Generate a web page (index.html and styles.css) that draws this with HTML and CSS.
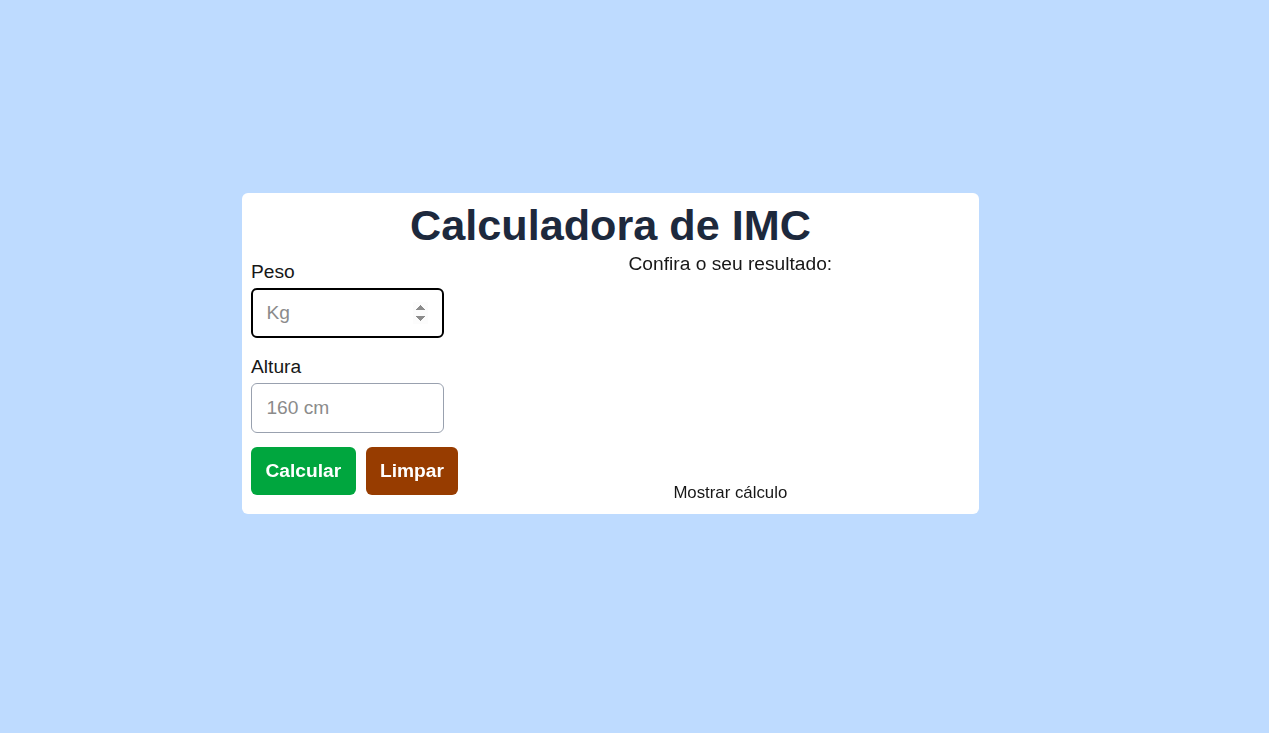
FILE: index.html
```html
<!DOCTYPE html>
<html lang="pt-BR">
<head>
<meta charset="utf-8">
<title>Calculadora de IMC</title>
<link rel="stylesheet" href="styles.css">
</head>
<body>
<main class="page">
  <section class="card">
    <h1 class="title">Calculadora de IMC</h1>
    <div class="grid">
      <form class="form">
        <div class="field">
          <label class="label" for="peso">Peso</label>
          <input class="input input-focus" id="peso" type="number" placeholder="Kg" autofocus>
        </div>
        <div class="field">
          <label class="label" for="altura">Altura</label>
          <input class="input" id="altura" type="number" placeholder="160 cm">
        </div>
        <div class="actions">
          <button type="button" class="btn btn-green">Calcular</button>
          <button type="button" class="btn btn-brown">Limpar</button>
        </div>
      </form>
      <div class="result">
        <p class="result-title">Confira o seu resultado:</p>
        <p class="result-link">Mostrar cálculo</p>
      </div>
    </div>
  </section>
</main>
</body>
</html>
```
FILE: styles.css
```css
html {
  font-size: 19.2px;
}
* {
  box-sizing: border-box;
}
body {
  margin: 0;
  background: #bedbff;
  font-family: "Liberation Sans", Arial, sans-serif;
  color: #171717;
  line-height: 1.5;
  min-height: 733px;
}
.page {
  padding: 193px 0 0 242px;
}
.card {
  width: 737px;
  background: #ffffff;
  border-radius: 6px;
  padding: 8px 9px 9px;
}
.title {
  margin: 0 0 1px;
  text-align: center;
  font-size: 2.25rem;
  line-height: 48px;
  font-weight: 700;
  color: #1d293d;
}
.grid {
  display: grid;
  grid-template-columns: 1fr 2fr;
}
.form {
  margin: 0;
  padding: 8px 0 0.5rem;
  display: flex;
  flex-direction: column;
}
.field {
  display: flex;
  flex-direction: column;
  align-items: flex-start;
  margin-bottom: 0.75rem;
}
.label {
  font-size: 1rem;
  line-height: 1.5rem;
  margin-bottom: 1.5px;
}
.input {
  width: 193px;
  height: 50px;
  padding: 0 0.75rem;
  border: 1px solid #99a1af;
  border-radius: 6px;
  font-family: inherit;
  font-size: 1rem;
  color: #171717;
  background: #ffffff;
  outline: none;
}
.input::placeholder {
  color: #8b8b8b;
}
.input-focus {
  border: 2px solid #000000;
  padding-left: calc(0.75rem - 1px);
}
.actions {
  display: flex;
  gap: 10px;
}
.btn {
  border: 0;
  border-radius: 6px;
  padding: 0.5rem 0.75rem;
  font-family: inherit;
  font-size: 1rem;
  line-height: 1.5rem;
  font-weight: 700;
  color: #ffffff;
  cursor: pointer;
}
.btn-green {
  background: #00a63e;
}
.btn-brown {
  background: #973c00;
}
.result {
  display: flex;
  flex-direction: column;
  align-items: center;
  justify-content: space-between;
}
.result-title {
  margin: 0;
  font-size: 1rem;
  line-height: 1.5rem;
}
.result-link {
  margin: 0;
  font-size: 0.875rem;
  line-height: 1.3125rem;
}
```
